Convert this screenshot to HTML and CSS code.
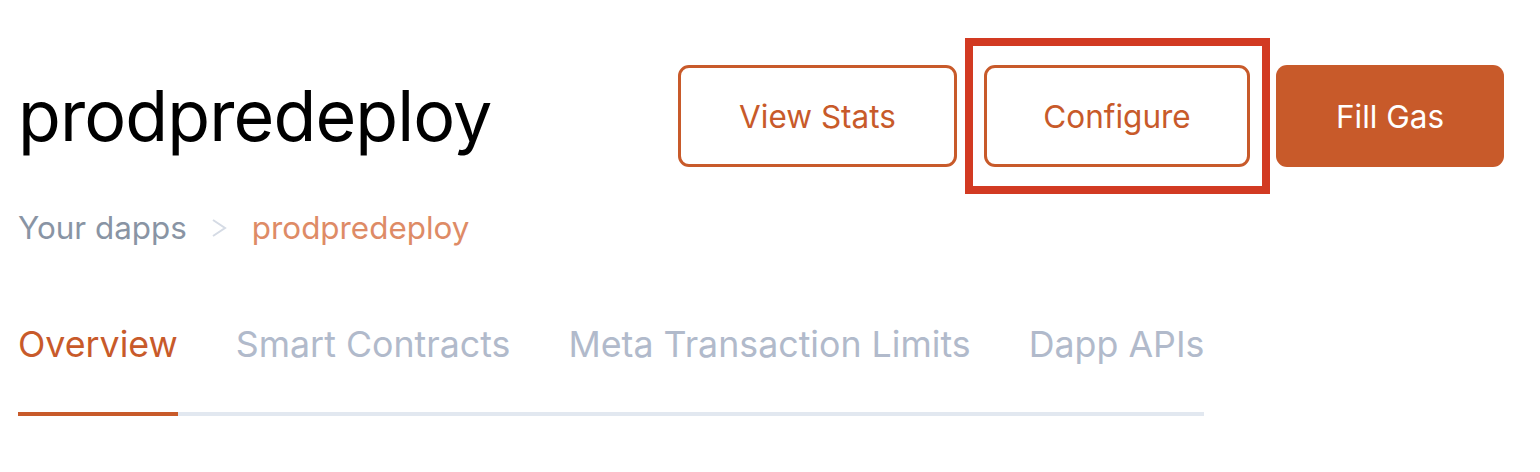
FILE: index.html
```html
<!DOCTYPE html>
<html>
<head>
<meta charset="utf-8">
<link rel="stylesheet" href="styles.css">
</head>
<body>
<div class="page">
  <div class="header">
    <div class="left">
      <h1 class="title">prodpredeploy</h1>
    </div>
    <div class="actions">
      <button class="btn btn-outline">View Stats</button>
      <div class="highlight"><button class="btn btn-outline">Configure</button></div>
      <button class="btn btn-fill">Fill Gas</button>
    </div>
  </div>
  <nav class="crumbs">
    <span class="crumb">Your dapps</span>
    <svg class="chev" width="16" height="22" viewBox="0 0 16 22"><path d="M2 3 L14 11 L2 19" fill="none" stroke="#D5DBE5" stroke-width="2"/></svg>
    <span class="crumb current">prodpredeploy</span>
  </nav>
  <div class="tabs">
    <div class="tab active">Overview</div>
    <div class="tab">Smart Contracts</div>
    <div class="tab">Meta Transaction Limits</div>
    <div class="tab">Dapp APIs</div>
  </div>
</div>
</body>
</html>
```
FILE: styles.css
```css
html, body { margin: 0; padding: 0; background: #fff; }
body { font-family: Inter, "Noto Sans", sans-serif; }
.page { padding: 0 36px 0 18px; }
.header { display: flex; justify-content: space-between; align-items: center; padding-top: 38px; }
.title { margin: 0; font-size: 70px; font-weight: 400; color: #000; letter-spacing: -0.9px; line-height: 1; }
.actions { display: flex; align-items: center; }
.btn { font-family: Inter, sans-serif; font-size: 31.5px; font-weight: 400; height: 102px; border-radius: 11px; cursor: pointer; }
.btn-outline { background: #fff; color: #C85A2A; border: 3px solid #C85A2A; }
.actions > .btn-outline { width: 279px; }
.highlight { border: 8px solid #D23A22; padding: 19px 12px 19px 11px; margin: 0 6px 0 8px; }
.highlight .btn { width: 266px; display: block; }
.btn-fill { background: #C85A2A; color: #fff; border: 0; width: 228px; }
.crumbs { display: flex; align-items: center; margin-top: 15px; font-size: 31.4px; }
.crumb { color: #8994A4; }
.crumb.current { color: #DE8B66; }
.chev { margin: 0 25px 0 24px; }
.tabs { display: flex; gap: 58px; width: max-content; border-bottom: 4px solid #E2E8F0; margin-top: 75px; }
.tab { font-size: 35.75px; white-space: nowrap; color: #B1BACB; padding-bottom: 46px; margin-bottom: -4px; border-bottom: 4px solid transparent; }
.tab.active { color: #C85A2A; border-bottom-color: #C85A2A; }
```
